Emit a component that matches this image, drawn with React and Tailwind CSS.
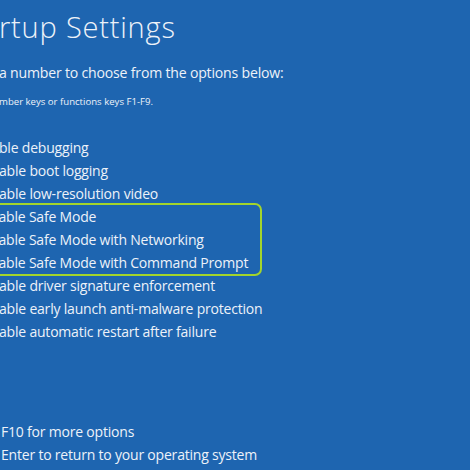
export default function App() {
  const options = [
    'ble debugging',
    'able boot logging',
    'able low-resolution video',
  ];
  const safe = [
    'able Safe Mode',
    'able Safe Mode with Networking',
    'able Safe Mode with Command Prompt',
  ];
  const rest = [
    'able driver signature enforcement',
    'able early launch anti-malware protection',
    'able automatic restart after failure',
  ];

  return (
    <div
      className="w-[470px] h-[470px] overflow-hidden bg-[#1e65b0] text-[#edf2f9] whitespace-nowrap"
      style={{ fontFamily: '"Open Sans", "Noto Sans", sans-serif' }}
    >
      <div className="pt-[5px] -ml-[1px]">
        <h1 className="text-[29px] font-light leading-[44px] tracking-[0.8px]">rtup Settings</h1>
        <p className="mt-[13px] text-[14.1px] leading-[22px] tracking-[-0.2px]">
          a number to choose from the options below:
        </p>
        <p className="mt-[10px] text-[9.6px] leading-[16px]">mber keys or functions keys F1-F9.</p>

        <div className="mt-[26px] text-[14px] leading-[23px] tracking-[-0.2px]">
          {options.map((t) => (
            <div key={t}>{t}</div>
          ))}
          <div className="-ml-[20px] pl-[20px] w-[283px] -my-[2px] border-[2.5px] border-[#a3d52c] rounded-[7px]">
            {safe.map((t) => (
              <div key={t} className="-ml-[2.5px]">{t}</div>
            ))}
          </div>
          {rest.map((t) => (
            <div key={t}>{t}</div>
          ))}
        </div>

        <div className="mt-[77px] text-[14px] leading-[23px] tracking-[-0.2px] pl-[2px]">
          <div>F10 for more options</div>
          <div>Enter to return to your operating system</div>
        </div>
      </div>
    </div>
  );
}
